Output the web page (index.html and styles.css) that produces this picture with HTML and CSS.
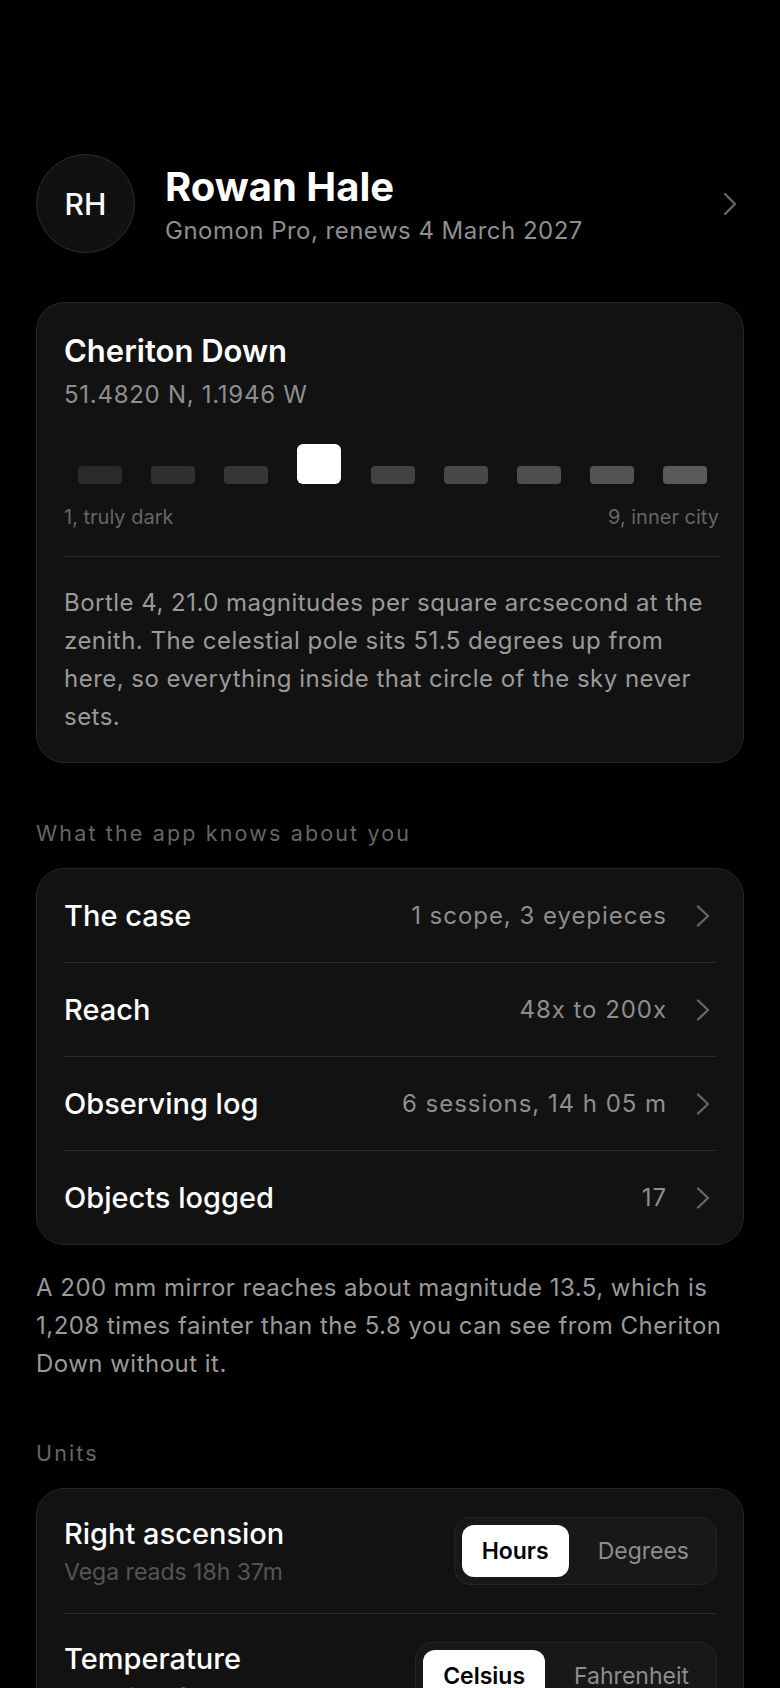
FILE: index.html
```html
<!DOCTYPE html>
<html lang="en">
<head>
  <meta charset="UTF-8">
  <title>Profile</title>
  <link rel="stylesheet" href="styles.css">
</head>
<body>
  <div class="page">
    <header class="profile">
      <div class="avatar">RH</div>
      <div class="who">
        <h1>Rowan Hale</h1>
        <p>Gnomon Pro, renews 4 March 2027</p>
      </div>
      <svg class="chev big" viewBox="0 0 16 24" width="16" height="24"><path d="M3 2 L13 12 L3 22"/></svg>
    </header>

    <section class="card site">
      <h2>Cheriton Down</h2>
      <div class="coords">51.4820 N, 1.1946 W</div>
      <div class="scale">
        <span class="bar"></span>
        <span class="bar"></span>
        <span class="bar"></span>
        <span class="bar on"></span>
        <span class="bar"></span>
        <span class="bar"></span>
        <span class="bar"></span>
        <span class="bar"></span>
        <span class="bar"></span>
      </div>
      <div class="scale-labels">
        <span>1, truly dark</span>
        <span>9, inner city</span>
      </div>
      <p class="blurb">Bortle 4, 21.0 magnitudes per square arcsecond at the zenith. The celestial pole sits 51.5 degrees up from here, so everything inside that circle of the sky never sets.</p>
    </section>

    <h3 class="section-label">What the app knows about you</h3>
    <div class="card list">
      <div class="row">
        <span class="label">The case</span>
        <span class="value">1 scope, 3 eyepieces</span>
        <svg class="chev" viewBox="0 0 14 22" width="14" height="22"><path d="M2 1.5 L12 11 L2 20.5"/></svg>
      </div>
      <div class="row">
        <span class="label">Reach</span>
        <span class="value">48x to 200x</span>
        <svg class="chev" viewBox="0 0 14 22" width="14" height="22"><path d="M2 1.5 L12 11 L2 20.5"/></svg>
      </div>
      <div class="row">
        <span class="label">Observing log</span>
        <span class="value">6 sessions, 14 h 05 m</span>
        <svg class="chev" viewBox="0 0 14 22" width="14" height="22"><path d="M2 1.5 L12 11 L2 20.5"/></svg>
      </div>
      <div class="row">
        <span class="label">Objects logged</span>
        <span class="value">17</span>
        <svg class="chev" viewBox="0 0 14 22" width="14" height="22"><path d="M2 1.5 L12 11 L2 20.5"/></svg>
      </div>
    </div>
    <p class="note">A 200 mm mirror reaches about magnitude 13.5, which is 1,208 times fainter than the 5.8 you can see from Cheriton Down without it.</p>

    <h3 class="section-label">Units</h3>
    <div class="card list units">
      <div class="row">
        <div class="unit-text">
          <span class="label">Right ascension</span>
          <span class="hint">Vega reads 18h 37m</span>
        </div>
        <div class="seg">
          <span class="opt active">Hours</span>
          <span class="opt">Degrees</span>
        </div>
      </div>
      <div class="row">
        <div class="unit-text">
          <span class="label">Temperature</span>
          <span class="hint">Last night fell to 4 °C</span>
        </div>
        <div class="seg">
          <span class="opt active">Celsius</span>
          <span class="opt">Fahrenheit</span>
        </div>
      </div>
    </div>
  </div>
</body>
</html>
```

FILE: styles.css
```css
* {
  box-sizing: border-box;
}
body {
  margin: 0;
  background: #000;
  color: #fff;
  font-family: Inter, "Noto Sans", sans-serif;
}
.page {
  padding: 154px 36px 40px;
}

/* header */
.profile {
  display: flex;
  align-items: center;
  gap: 30px;
  margin-bottom: 49px;
}
.avatar {
  width: 99px;
  height: 99px;
  flex: none;
  border-radius: 50%;
  background: #111;
  border: 1.5px solid #2c2c2c;
  display: flex;
  align-items: center;
  justify-content: center;
  font-size: 30px;
  font-weight: 500;
}
.who {
  flex: 1;
  padding-top: 4px;
}
.who h1 {
  margin: 0;
  font-size: 40px;
  line-height: 46px;
  font-weight: 700;
}
.who p {
  margin: 5px 0 0;
  font-size: 24px;
  line-height: 32px;
  letter-spacing: 0.02em;
  color: #8e8e8e;
}
.chev {
  flex: none;
  fill: none;
  stroke: #666;
  stroke-width: 2.4;
  stroke-linecap: round;
  stroke-linejoin: round;
}
.chev.big {
  margin-right: 6px;
}

/* cards */
.card {
  background: #121212;
  border: 1px solid #262626;
  border-radius: 28px;
}
.site {
  padding: 30px 26px 26px 27px;
}
.site h2 {
  margin: 0;
  font-size: 31px;
  line-height: 36px;
  font-weight: 600;
}
.coords {
  margin-top: 11px;
  font-size: 24px;
  line-height: 30px;
  color: #8e8e8e;
  letter-spacing: 0.03em;
}
.scale {
  display: flex;
  justify-content: space-between;
  align-items: flex-end;
  height: 40px;
  margin-top: 34px;
  padding: 0 10px 0 14px;
}
.bar {
  width: 44px;
  height: 18px;
  border-radius: 4px;
  background: #2a2a2a;
}
.bar:nth-child(2) { background: #303030; }
.bar:nth-child(3) { background: #363636; }
.bar:nth-child(5) { background: #424242; }
.bar:nth-child(6) { background: #484848; }
.bar:nth-child(7) { background: #4e4e4e; }
.bar:nth-child(8) { background: #545454; }
.bar:nth-child(9) { background: #5a5a5a; }
.bar.on {
  height: 40px;
  border-radius: 6px;
  background: #fff;
}
.scale-labels {
  display: flex;
  justify-content: space-between;
  margin-top: 20px;
  margin-right: -2px;
  font-size: 20px;
  line-height: 26px;
  color: #666;
  padding-bottom: 26px;
  border-bottom: 1px solid #2a2a2a;
}
.blurb {
  margin: 27px 0 0;
  font-size: 24px;
  line-height: 38px;
  letter-spacing: 0.02em;
  color: #9a9a9a;
}

.section-label {
  margin: 56px 0 21px;
  font-size: 21.5px;
  line-height: 28px;
  font-weight: 400;
  letter-spacing: 0.1em;
  color: #666;
}

/* list rows */
.list {
  padding: 0 26px 0 27px;
}
.row {
  display: flex;
  align-items: center;
  padding: 29px 0;
  border-top: 1px solid #2a2a2a;
}
.row:first-child {
  border-top: none;
}
.label {
  flex: 1;
  font-size: 29px;
  line-height: 35px;
  font-weight: 500;
}
.value {
  font-size: 24px;
  line-height: 35px;
  color: #8e8e8e;
  letter-spacing: 0.04em;
}
.row .chev {
  margin-left: 29px;
  margin-right: 7px;
}
.note {
  margin: 24px 0 0;
  font-size: 24px;
  line-height: 38px;
  letter-spacing: 0.02em;
  color: #9a9a9a;
}

/* units */
.units .row {
  padding: 27px 0;
}
.unit-text {
  flex: 1;
  display: flex;
  flex-direction: column;
}
.hint {
  margin-top: 7px;
  font-size: 23px;
  line-height: 28px;
  color: #555;
}
.seg {
  display: flex;
  gap: 9px;
  padding: 7px;
  background: #181818;
  border: 1px solid #262626;
  border-radius: 17px;
}
.opt {
  padding: 0 20px;
  height: 52px;
  line-height: 52px;
  border-radius: 12px;
  font-size: 23px;
  color: #8e8e8e;
}
.opt.active {
  background: #fff;
  color: #000;
  font-weight: 600;
}
```
